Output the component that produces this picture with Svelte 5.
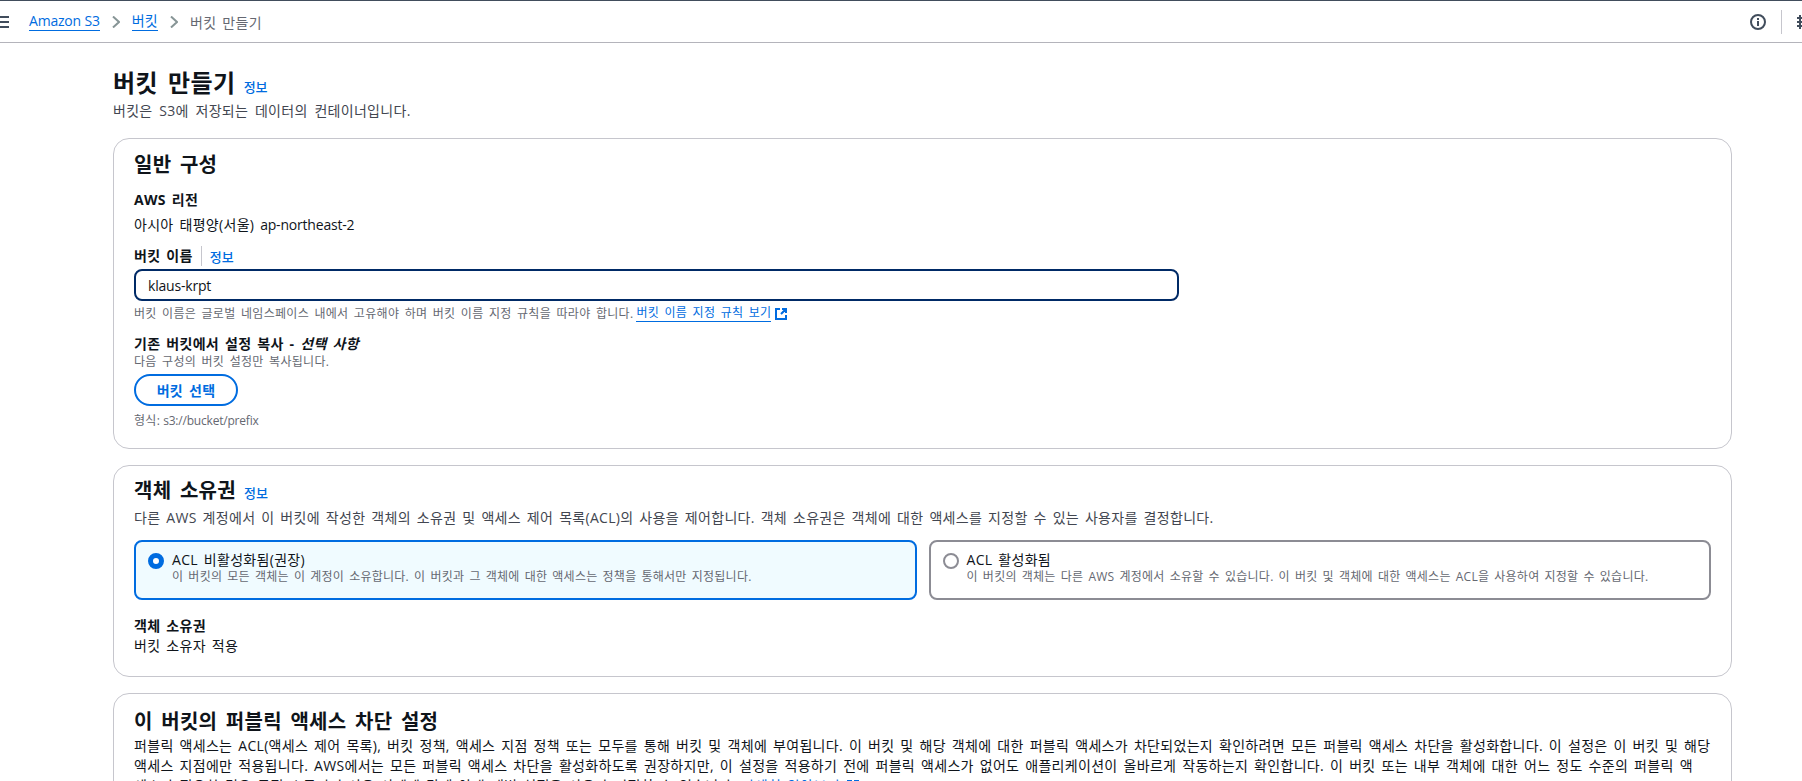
<script>
  const info = "정보";
</script>

<div class="page">
  <header class="topbar">
    <svg class="menu" width="9" height="12" viewBox="0 0 9 12"><path d="M0 1h9M0 6h9M0 11h9" stroke="#414d5c" stroke-width="2" fill="none" /></svg>
    <nav class="crumbs">
      <a class="lat" href="#s3">Amazon S3</a>
      <svg width="8" height="12" viewBox="0 0 8 12"><path d="M1 0.5l6 5.5-6 5.5" stroke="#879596" stroke-width="2" fill="none" /></svg>
      <a href="#b">버킷</a>
      <svg width="8" height="12" viewBox="0 0 8 12"><path d="M1 0.5l6 5.5-6 5.5" stroke="#879596" stroke-width="2" fill="none" /></svg>
      <span>버킷 만들기</span>
    </nav>
    <div class="tools">
      <svg width="16" height="16" viewBox="0 0 16 16"><circle cx="8" cy="8" r="7" stroke="#414d5c" stroke-width="2" fill="none" /><path d="M8 7v5M8 4v2" stroke="#414d5c" stroke-width="2" fill="none" /></svg>
      <i class="sep"></i>
      <svg width="12" height="16" viewBox="0 0 12 16"><path d="M3 1v14M0 4h12M0 8h12M0 12h12" stroke="#414d5c" stroke-width="2" fill="none" /></svg>
    </div>
  </header>

  <main class="content">
    <div class="head">
      <h1>버킷 만들기</h1>
      <a class="info" href="#i">{info}</a>
    </div>
    <p class="lead">버킷은 S3에 저장되는 데이터의 컨테이너입니다.</p>

    <section class="card general">
      <h2>일반 구성</h2>
      <div class="label region-label">AWS 리전</div>
      <div class="value">아시아 태평양(서울) <span class="lat">ap-northeast-2</span></div>

      <div class="name-label">
        <span class="label">버킷 이름</span>
        <i class="vbar"></i>
        <a class="info" href="#i">{info}</a>
      </div>
      <input class="input" type="text" value="klaus-krpt" />
      <p class="hint">
        버킷 이름은 글로벌 네임스페이스 내에서 고유해야 하며 버킷 이름 지정 규칙을 따라야 합니다.
        <a class="rule" href="#r">버킷 이름 지정 규칙 보기</a>
        <svg width="14" height="14" viewBox="0 0 14 14"><path d="M6 2H2v10h10V8M8 2h4v4M12 2L7 7" stroke="#006ce0" stroke-width="2" fill="none" /></svg>
      </p>

      <div class="label copy-label">기존 버킷에서 설정 복사 - <em>선택 사항</em></div>
      <p class="hint tight">다음 구성의 버킷 설정만 복사됩니다.</p>
      <button class="btn">버킷 선택</button>
      <p class="hint format">형식: <span class="lat">s3://bucket/prefix</span></p>
    </section>

    <section class="card owner">
      <div class="head">
        <h2>객체 소유권</h2>
        <a class="info" href="#i">{info}</a>
      </div>
      <p class="desc">다른 AWS 계정에서 이 버킷에 작성한 객체의 소유권 및 액세스 제어 목록(ACL)의 사용을 제어합니다. 객체 소유권은 객체에 대한 액세스를 지정할 수 있는 사용자를 결정합니다.</p>

      <div class="tiles">
        <div class="tile on">
          <span class="radio"></span>
          <div>
            <div class="tile-title">ACL 비활성화됨(권장)</div>
            <div class="tile-sub">이 버킷의 모든 객체는 이 계정이 소유합니다. 이 버킷과 그 객체에 대한 액세스는 정책을 통해서만 지정됩니다.</div>
          </div>
        </div>
        <div class="tile">
          <span class="radio"></span>
          <div>
            <div class="tile-title">ACL 활성화됨</div>
            <div class="tile-sub">이 버킷의 객체는 다른 AWS 계정에서 소유할 수 있습니다. 이 버킷 및 객체에 대한 액세스는 ACL을 사용하여 지정할 수 있습니다.</div>
          </div>
        </div>
      </div>

      <div class="label owner-label">객체 소유권</div>
      <div class="value">버킷 소유자 적용</div>
    </section>

    <section class="card public">
      <h2>이 버킷의 퍼블릭 액세스 차단 설정</h2>
      <p class="desc dark">퍼블릭 액세스는 ACL(액세스 제어 목록), 버킷 정책, 액세스 지점 정책 또는 모두를 통해 버킷 및 객체에 부여됩니다. 이 버킷 및 해당 객체에 대한 퍼블릭 액세스가 차단되었는지 확인하려면 모든 퍼블릭 액세스 차단을 활성화합니다. 이 설정은 이 버킷 및 해당<br />액세스 지점에만 적용됩니다. AWS에서는 모든 퍼블릭 액세스 차단을 활성화하도록 권장하지만, 이 설정을 적용하기 전에 퍼블릭 액세스가 없어도 애플리케이션이 올바르게 작동하는지 확인합니다. 이 버킷 또는 내부 객체에 대한 어느 정도 수준의 퍼블릭 액<br />세스가 필요한 경우 특정 스토리지 사용 사례에 맞게 아래 개별 설정을 사용자 지정할 수 있습니다. <a class="rule" href="#m">자세히 알아보기</a> <svg class="inline-ext" width="14" height="14" viewBox="0 0 14 14"><path d="M6 2H2v10h10V8M8 2h4v4M12 2L7 7" stroke="#006ce0" stroke-width="2" fill="none" /></svg></p>
    </section>
  </main>
</div>

<style>
  :global(body) {
    margin: 0;
    background: #fff;
    overflow: hidden;
  }
  .page {
    height: 781px;
    overflow: hidden;
    font-family: "Open Sans", "Noto Sans CJK KR", sans-serif;
    font-size: 14px;
    color: #0f141a;
    letter-spacing: 0.3px;
    word-spacing: 2px;
  }
  .lat {
    letter-spacing: -0.2px;
    word-spacing: 0;
  }
  a {
    color: #006ce0;
    text-decoration: none;
  }
  .topbar {
    display: flex;
    align-items: center;
    height: 41px;
    border-top: 1px solid #414d5c;
    border-bottom: 1px solid #b4b4bb;
  }
  .menu {
    flex: none;
  }
  .crumbs {
    display: flex;
    align-items: center;
    gap: 12px;
    margin-left: 20px;
  }
  .crumbs a {
    border-bottom: 1px solid #006ce0;
    line-height: 18px;
  }
  .crumbs span {
    color: #656871;
  }
  .tools {
    margin-left: auto;
    display: flex;
    align-items: center;
    gap: 15px;
    width: 52px;
    overflow: hidden;
    flex: none;
  }
  .tools svg {
    flex: none;
  }
  .sep {
    width: 1px;
    height: 24px;
    background: #c6c6cd;
    flex: none;
  }
  .content {
    width: 1619px;
    margin-left: 113px;
    padding-top: 21px;
  }
  .head {
    display: flex;
    align-items: baseline;
    gap: 8px;
  }
  h1 {
    margin: 0;
    font-size: 24px;
    line-height: 37px;
    font-weight: 700;
    letter-spacing: 0.5px;
    word-spacing: 3px;
  }
  h2 {
    margin: 0;
    font-size: 20px;
    line-height: 28px;
    font-weight: 700;
    word-spacing: 3px;
  }
  .info {
    font-size: 13px;
    font-weight: 500;
    letter-spacing: 0;
  }
  .lead {
    margin: 0 0 17px;
    line-height: 20px;
    color: #424650;
    word-spacing: 2.8px;
  }
  .card {
    border: 1px solid #c6c6cd;
    border-radius: 16px;
    padding: 11px 20px;
    margin-bottom: 16px;
    box-sizing: border-box;
  }
  .general {
    height: 311px;
    padding-top: 12px;
  }
  .owner {
    height: 212px;
  }
  .public {
    height: 200px;
    padding-top: 14px;
  }
  .label {
    font-weight: 700;
    line-height: 20px;
  }
  .value {
    line-height: 20px;
    margin-top: 5px;
  }
  .region-label {
    margin-top: 11px;
  }
  .name-label {
    display: flex;
    align-items: center;
    margin-top: 11px;
    height: 20px;
  }
  .vbar {
    width: 1px;
    height: 20px;
    background: #c6c6cd;
    margin: 0 8px;
  }
  .input {
    display: block;
    width: 1045px;
    height: 32px;
    box-sizing: border-box;
    margin-top: 3px;
    padding: 0 12px;
    border: 2px solid #002a66;
    border-radius: 8px;
    font: inherit;
    color: #0f141a;
    letter-spacing: -0.2px;
    outline: none;
  }
  .hint {
    margin: 4px 0 0;
    font-size: 12px;
    line-height: 16px;
    color: #656871;
    display: flex;
    align-items: center;
    gap: 3px;
  }
  .rule {
    border-bottom: 1px solid #006ce0;
  }
  .copy-label {
    margin-top: 12px;
  }
  .copy-label em {
    font-style: italic;
  }
  .tight {
    margin-top: 0;
  }
  .btn {
    display: block;
    margin-top: 4px;
    width: 104px;
    height: 32px;
    border: 2px solid #006ce0;
    border-radius: 20px;
    background: #fff;
    color: #006ce0;
    font: inherit;
    font-weight: 700;
    letter-spacing: inherit;
    word-spacing: inherit;
  }
  .format {
    margin-top: 7px;
  }
  .desc {
    margin: 3px 0 0;
    line-height: 20px;
    color: #424650;
  }
  .desc.dark {
    color: #0f141a;
    margin-top: 0;
    letter-spacing: 0.31px;
  }
  .inline-ext {
    vertical-align: -2px;
  }
  .tiles {
    display: grid;
    grid-template-columns: 1fr 1fr;
    gap: 12px;
    margin-top: 12px;
  }
  .tile {
    display: flex;
    gap: 8px;
    height: 60px;
    box-sizing: border-box;
    padding: 9px 12px;
    border: 2px solid #8c8c94;
    border-radius: 8px;
  }
  .tile.on {
    border-color: #006ce0;
    background: #f0fbff;
  }
  .radio {
    width: 16px;
    height: 16px;
    flex: none;
    margin-top: 2px;
    box-sizing: border-box;
    border: 2px solid #8c8c94;
    border-radius: 50%;
  }
  .on .radio {
    border: 5px solid #006ce0;
    background: #fff;
  }
  .tile-title {
    line-height: 18px;
  }
  .tile-sub {
    font-size: 12px;
    line-height: 16px;
    color: #656871;
    letter-spacing: 0.25px;
    word-spacing: 1.7px;
  }
  .owner-label {
    margin-top: 16px;
  }
  .owner-label + .value {
    margin-top: 0;
  }
</style>
